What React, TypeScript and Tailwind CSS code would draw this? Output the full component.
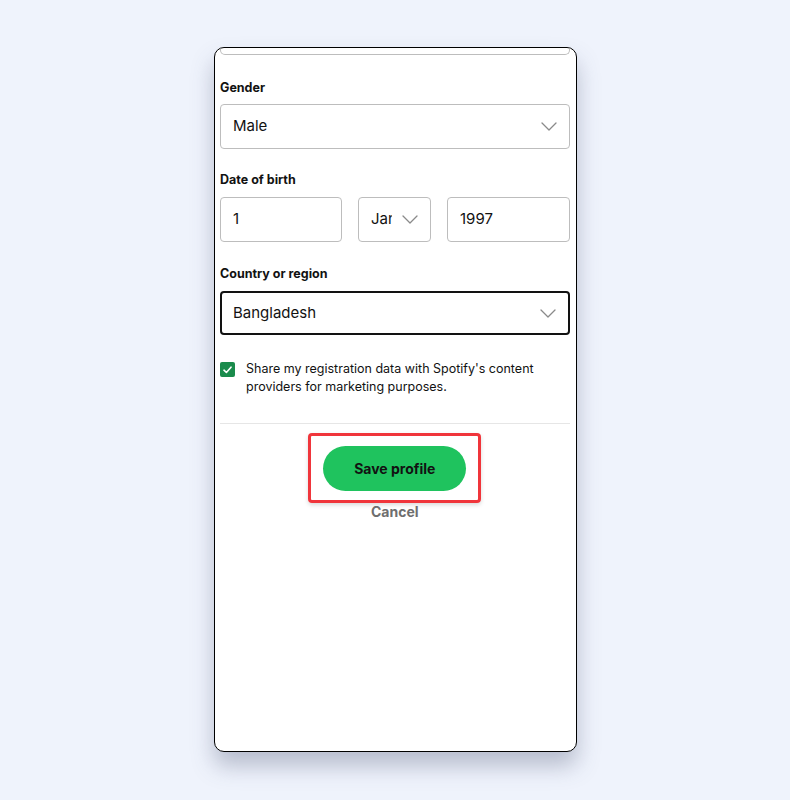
import React from 'react';

const font = { fontFamily: 'Inter, "Noto Sans", sans-serif' };

const Chevron = ({ className = '' }: { className?: string }) => (
  <svg width="16" height="9" viewBox="0 0 16 9" fill="none" className={className}>
    <path d="M1 1l7 7 7-7" stroke="#8a8a8a" strokeWidth="1.3" strokeLinecap="round" strokeLinejoin="round" />
  </svg>
);

const Label = ({ children }: { children: React.ReactNode }) => (
  <div className="h-[16px] text-[12.5px] leading-[16px] font-bold text-[#121212]">{children}</div>
);

export default function App() {
  return (
    <div className="min-h-[800px] w-full bg-[#eff3fc] pt-[47px]" style={font}>
      <div className="mx-auto h-[705px] w-[363px] overflow-hidden rounded-[10px] border-[1.5px] border-black bg-white shadow-[0_14px_22px_rgba(80,90,120,0.35)]">
        <div className="pl-[5.5px] pr-[6px]">
          {/* cut-off field above */}
          <div className="h-[7px] rounded-b-[5px] border border-t-0 border-[#bdbdbd]" />

          <div className="mt-[25px]">
            <Label>Gender</Label>
          </div>
          <div className="mt-[8px] flex h-[45px] items-center justify-between rounded-[4px] border border-[#bdbdbd] pl-[12px] pr-[12px]">
            <span className="text-[15px] text-[#121212]">Male</span>
            <Chevron />
          </div>

          <div className="mt-[23px]">
            <Label>Date of birth</Label>
          </div>
          <div className="mt-[9px] flex h-[45px] gap-[16px]">
            <div className="flex w-[122px] items-center rounded-[4px] border border-[#bdbdbd] pl-[12px] text-[15px] text-[#121212]">
              1
            </div>
            <div className="flex w-[73px] items-center gap-[10px] rounded-[4px] border border-[#bdbdbd] pl-[12px] text-[15px] text-[#121212]">
              <span className="w-[21px] overflow-hidden whitespace-nowrap">Jan</span>
              <Chevron />
            </div>
            <div className="flex flex-1 items-center rounded-[4px] border border-[#bdbdbd] pl-[12px] text-[15px] text-[#121212]">
              1997
            </div>
          </div>

          <div className="mt-[24px]">
            <Label>Country or region</Label>
          </div>
          <div className="mt-[9px] flex h-[44px] items-center justify-between rounded-[4px] border-2 border-[#121212] pl-[11px] pr-[12px]">
            <span className="text-[15px] text-[#121212]">Bangladesh</span>
            <Chevron />
          </div>

          <div className="mt-[25px] flex gap-[11px]">
            <div className="mt-[2px] flex h-[15px] w-[15px] shrink-0 items-center justify-center rounded-[2px] bg-[#1a8b4c]">
              <svg width="9" height="8" viewBox="0 0 9 8" fill="none">
                <path d="M1 4.2l2.4 2.3L8 1.2" stroke="white" strokeWidth="1.6" strokeLinecap="round" strokeLinejoin="round" />
              </svg>
            </div>
            <p className="text-[12.5px] leading-[18px] text-[#121212]">
              Share my registration data with Spotify's content providers for marketing purposes.
            </p>
          </div>

          <div className="mt-[27px] h-px bg-[#e6e6e6]" />

          <div className="mt-[9px] flex flex-col items-center">
            <div className="flex h-[70px] w-[173px] items-center justify-center rounded-[4px] border-[3px] border-[#f0353b] shadow-[0_2px_4px_rgba(0,0,0,0.15)]">
              <button className="h-[45px] w-[143px] rounded-full bg-[#1fc35e] text-[14px] font-bold text-[#121212]">
                Save profile
              </button>
            </div>
            <div className="text-[14px] leading-[18px] font-bold text-[#6e6e6e]">Cancel</div>
          </div>
        </div>
      </div>
    </div>
  );
}
